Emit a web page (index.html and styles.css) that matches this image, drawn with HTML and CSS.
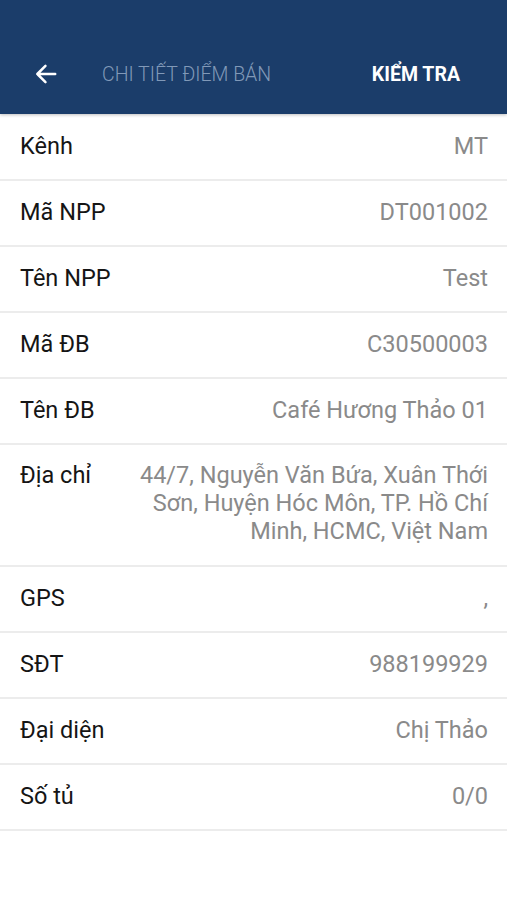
FILE: index.html
```html
<!DOCTYPE html>
<html lang="vi">
<head>
<meta charset="utf-8">
<link rel="stylesheet" href="styles.css">
</head>
<body>
<header class="appbar">
  <div class="toolbar">
    <svg class="back" width="26" height="26" viewBox="0 0 24 24"><path d="M20.5 12H4M11.5 4.5L4 12l7.5 7.5" fill="none" stroke="#fff" stroke-width="2.3" stroke-linecap="round" stroke-linejoin="round"/></svg>
    <div class="title">CHI TIẾT ĐIỂM BÁN</div>
    <div class="action">KIỂM TRA</div>
  </div>
</header>
<main class="list">
  <div class="row"><div class="label">Kênh</div><div class="value">MT</div></div>
  <div class="row"><div class="label">Mã NPP</div><div class="value">DT001002</div></div>
  <div class="row"><div class="label">Tên NPP</div><div class="value">Test</div></div>
  <div class="row"><div class="label">Mã ĐB</div><div class="value">C30500003</div></div>
  <div class="row"><div class="label">Tên ĐB</div><div class="value">Café Hương Thảo 01</div></div>
  <div class="row multi"><div class="label">Địa chỉ</div><div class="value">44/7, Nguyễn Văn Bứa, Xuân Thới Sơn, Huyện Hóc Môn, TP. Hồ Chí Minh, HCMC, Việt Nam</div></div>
  <div class="row"><div class="label">GPS</div><div class="value">,</div></div>
  <div class="row"><div class="label">SĐT</div><div class="value">988199929</div></div>
  <div class="row"><div class="label">Đại diện</div><div class="value">Chị Thảo</div></div>
  <div class="row"><div class="label">Số tủ</div><div class="value">0/0</div></div>
</main>
</body>
</html>
```

FILE: styles.css
```css
* { box-sizing: border-box; }
html, body { margin: 0; padding: 0; background: #fff; }
body { font-family: Roboto, "Noto Sans", sans-serif; }

.appbar {
  background: #1b3d6a;
  padding-top: 34px;
  box-shadow: 0 1px 3px rgba(0,0,0,0.25);
  position: relative;
}
.toolbar {
  height: 80px;
  display: flex;
  align-items: center;
  padding: 0 47px 0 33px;
}
.back { flex-shrink: 0; }
.title {
  margin-left: 43px;
  flex: 1;
  color: #8199b8;
  font-weight: 300;
  font-size: 19.5px;
}
.action {
  color: #fff;
  font-weight: 700;
  font-size: 19.5px;
}

.list { padding-top: 1px; }
.row {
  display: flex;
  align-items: flex-start;
  padding: 17px 19px 19px 20px;
  border-bottom: 2px solid #ececec;
  font-size: 23.5px;
  line-height: 28px;
}
.row.multi { padding-top: 16px; padding-bottom: 20px; }
.label { color: #151515; flex-shrink: 0; }
.value {
  flex: 1;
  text-align: right;
  color: #8a8a8a;
  margin-left: 42px;
}
```
